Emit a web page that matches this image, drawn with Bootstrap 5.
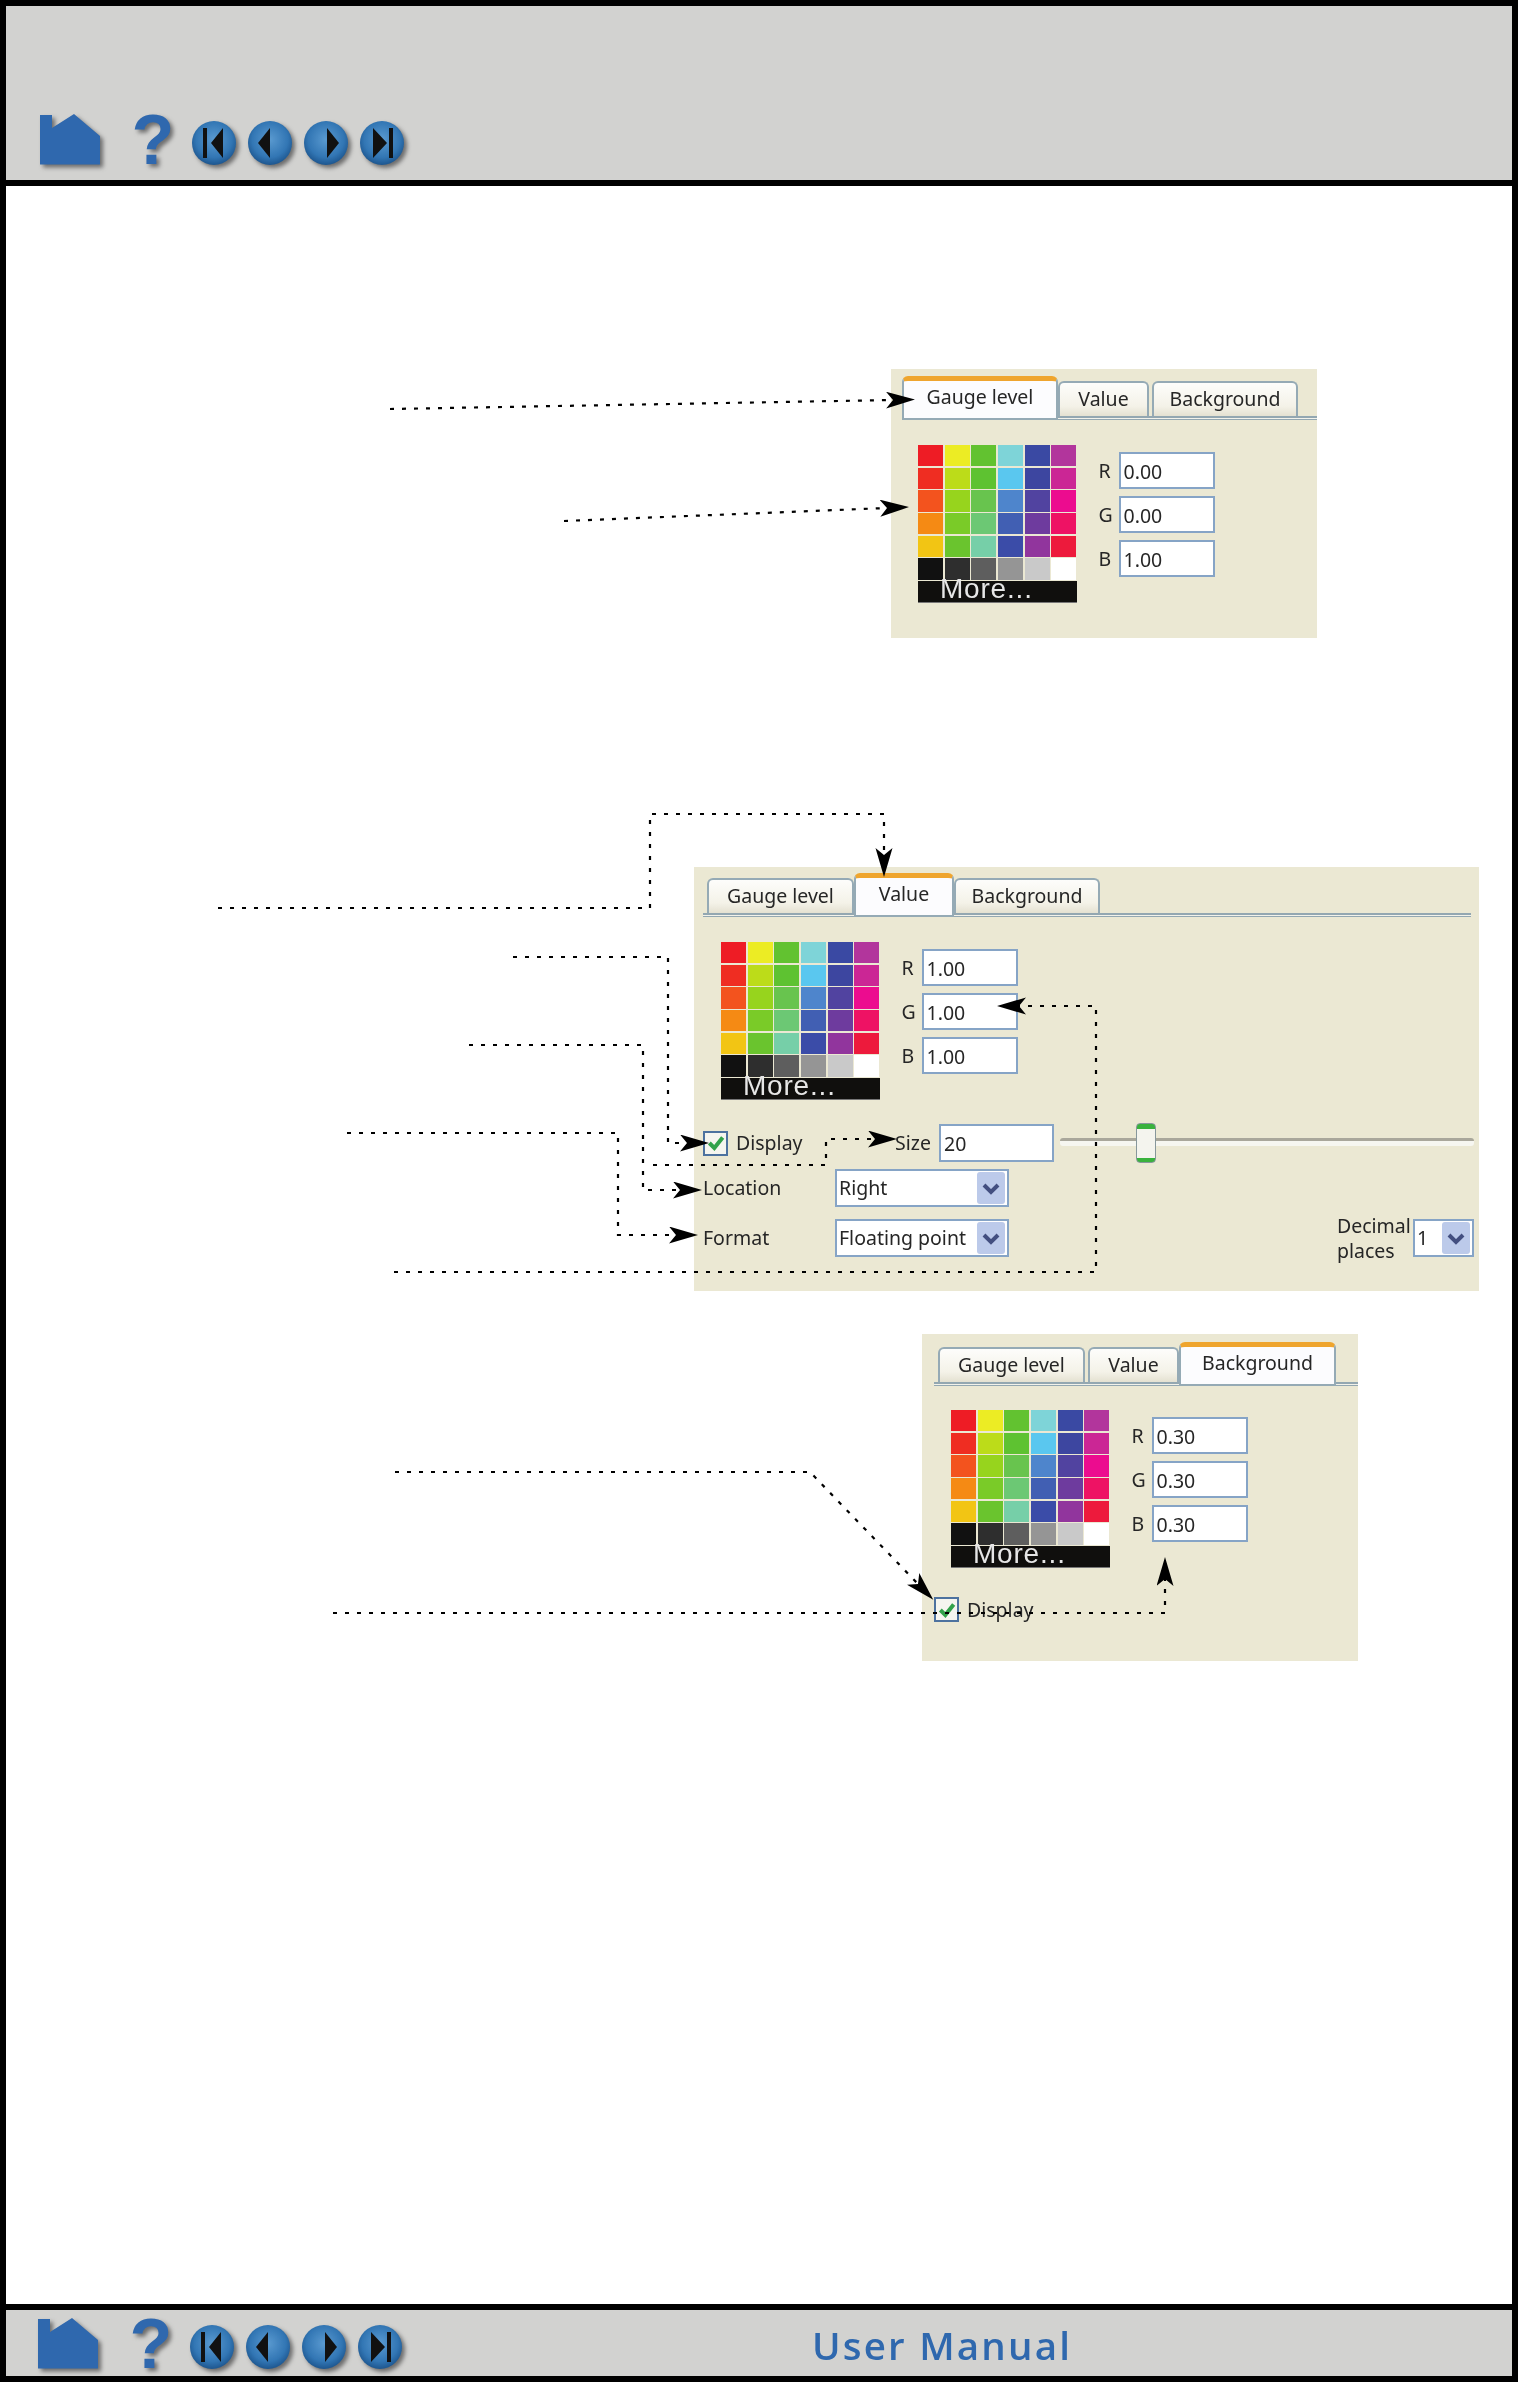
<!DOCTYPE html>
<html lang="en">
<head>
    <meta charset="UTF-8">
    <title>User Manual</title>
    <link href="https://cdn.jsdelivr.net/npm/bootstrap@5.3.0/dist/css/bootstrap.min.css" rel="stylesheet">
    <script src="https://cdn.jsdelivr.net/npm/bootstrap@5.3.0/dist/js/bootstrap.bundle.min.js"></script>
    <style>
        body { background: #000; font-family: "Noto Sans", "Liberation Sans", sans-serif; color: #262626; }
        .frame { height: 2382px; padding: 6px; gap: 6px; }
        .top-bar { height: 174px; background: #d2d2d0; padding: 0 0 13px 34px; }
        .bottom-bar { height: 66px; background: #d2d2d0; padding: 0 0 5px 32px; position: relative; }
        .nav-icons { filter: drop-shadow(3px 3px 2px #6c6c6c) blur(.4px); }
        .help-mark { font-family: "Liberation Sans", sans-serif; font-weight: 700; font-size: 70px; line-height: 54px; width: 44px; color: #2f68ae; margin: 0 15px 0 29px; }
        .round-btn { width: 48px; height: 48px; margin-right: 8px; }
        .home-btn { width: 62px; height: 54px; }
        .manual-title { position: absolute; left: 806px; top: 15px; font-family: "Open Sans", sans-serif; font-weight: 600; font-size: 38.500px; line-height: 40px; letter-spacing: 2.200px; color: #2f68ae; filter: blur(.5px); }
        .canvas-area { position: relative; background: #fff; }
        .notes { position: absolute; left: 0; top: 0; z-index: 3; }
        .notes .dots { fill: none; stroke: #000; stroke-width: 2.2; stroke-dasharray: 4 8; }
        .shot { position: absolute; background: #ebe8d3; filter: blur(.35px); font-size: 19.500px; line-height: 1; }
        .shot-one { left: 885px; top: 183px; width: 426px; height: 269px; padding: 7px 0 0 11px; }
        .shot-two { left: 688px; top: 681px; width: 785px; height: 424px; padding: 6px 5px 0 9px; }
        .shot-three { left: 916px; top: 1148px; width: 436px; height: 327px; padding: 8px 0 0 12px; }
        .tab-strip { align-items: flex-end; border-bottom: 0; padding-left: 4px; height: 44px; background: linear-gradient(#93a7b1 0 1.500px, #f2f2ea 1.500px 3px, #93a7b1 3px) bottom / 100% 4.500px no-repeat; }
        .shot-one .tab-strip { padding-left: 0; }
        .shot-two .tab-strip { margin-right: 3px; }
        .tab-strip .nav-item:not(.is-on) + .nav-item:not(.is-on) { margin-left: 3px; }
        .tab-strip .nav-link { padding: 0; margin: 0 0 4px; text-align: center; height: 35px; line-height: 32px; color: #262626; border: 2px solid #95aab5; border-bottom: 0; border-radius: 6px 6px 0 0; background: linear-gradient(#fdfdfb, #f4f2e8 70%, #e4e1d1); }
        .tab-strip .nav-link.active { margin: 0; height: 44px; line-height: 32px; color: #262626; background: #fcfcfe; border: 2px solid #95aab5; border-top: 5px solid #efa52e; border-bottom: 2px solid #95aab5; border-radius: 6px 6px 0 0; }
        .t-gauge { width: 147px; }
        .t-value { width: 91px; }
        .t-back { width: 146px; }
        .is-on .t-gauge { width: 156px; }
        .is-on .t-value { width: 100px; }
        .is-on .t-back { width: 157px; }
        .picker { padding-left: 16px; margin-top: 25px; gap: 22px; }
        .shot-two .picker { padding-left: 18px; }
        .shot-three .picker { padding-left: 17px; margin-top: 24px; }
        .swatch-box { width: 158.500px; }
        .swatch-grid { display: grid; grid-template-columns: repeat(6, 1fr); gap: 1.500px; }
        .swatch-cell { height: 21.200px; }
        .more-bar { height: 21px; margin-top: 1.500px; background: #100f0d; color: #e6e6e6; font-family: "Liberation Sans", sans-serif; font-size: 28px; line-height: 15px; padding-left: 22px; letter-spacing: .8px; box-shadow: 0 1px 0 #777; }
        .rgb-list { gap: 7px; padding-top: 7px; }
        .rgb-label { width: 20px; }
        .val-input { width: 96px; height: 37px; padding: 1px 3px 0; border: 2px solid #86a4c6; border-radius: 0; background: #fff; font: inherit; color: #262626; }
        .val-select { height: 38px; padding: 0 0 0 2px; border: 2px solid #86a4c6; border-radius: 0; font: inherit; line-height: 1.3; color: #262626; background-color: #fff; background-position: right 2px center; background-size: 28px 32px;
            background-image: url("data:image/svg+xml,%3csvg xmlns='http://www.w3.org/2000/svg' viewBox='0 0 28 32'%3e%3crect width='28' height='32' rx='3' fill='%23bccaea'/%3e%3cpath d='M7 13l7 7 7-7' fill='none' stroke='%23434f80' stroke-width='4'/%3e%3c/svg%3e"); }
        .tick-box.form-check-input { width: 25px; height: 25px; margin: 0; border: 2px solid #4d729f; border-radius: 0; background-color: #f5f5ef; background-size: 20px;
            background-image: url("data:image/svg+xml,%3csvg xmlns='http://www.w3.org/2000/svg' viewBox='0 0 18 18'%3e%3cpath d='M3 9l4.500 4.500L15 4' fill='none' stroke='%2332a24a' stroke-width='3.600'/%3e%3c/svg%3e"); }
        .size-row { margin-top: 24px; height: 40px; }
        .w-size { width: 115px; height: 38px; }
        .w-pick { width: 174px; }
        .w-dec { width: 61px; }
        .size-range { width: 414px; height: 38px; padding: 0; margin-left: 6px; align-self: flex-start; }
        .size-range::-webkit-slider-runnable-track { height: 8px; background: linear-gradient(#a9a79b 0 3px, #f6f6f0 3px); border-radius: 3px; }
        .size-range::-webkit-slider-thumb { -webkit-appearance: none; width: 20px; height: 40px; margin-top: -15px; border: 1px solid #87979b; border-radius: 4px; background: linear-gradient(#39b23d 0 5px, #f4f4ee 5px 34px, #39b23d 34px); }
        .field-row { height: 38px; }
        .field-loc { margin-top: 6px; }
        .field-fmt { margin-top: 12px; }
        .field-name { width: 132px; }
        .dec-label { width: 76px; line-height: 25px; }
        .display-row { margin-top: 30px; }
    </style>
</head>
<body>
<svg width="0" height="0" class="position-absolute">
    <defs>
        <radialGradient id="ballFill" cx="50%" cy="42%" r="58%">
            <stop offset="0" stop-color="#5a9ad0"/>
            <stop offset=".7" stop-color="#3276b4"/>
            <stop offset="1" stop-color="#1d568f"/>
        </radialGradient>
        <symbol id="btnFirst" viewBox="0 0 48 48"><circle cx="24" cy="24" r="22" fill="url(#ballFill)"/><path d="M13 9h4v30h-4zM21 24L33 9v30z" fill="#111"/></symbol>
        <symbol id="btnPrev" viewBox="0 0 48 48"><circle cx="24" cy="24" r="22" fill="url(#ballFill)"/><path d="M12 24L24 9v30z" fill="#111"/></symbol>
        <symbol id="btnNext" viewBox="0 0 48 48"><circle cx="24" cy="24" r="22" fill="url(#ballFill)"/><path d="M37 24L25 9v30z" fill="#111"/></symbol>
        <symbol id="btnLast" viewBox="0 0 48 48"><circle cx="24" cy="24" r="22" fill="url(#ballFill)"/><path d="M35 9h-4v30h4zM29 24L15 9v30z" fill="#111"/></symbol>
        <symbol id="btnHome" viewBox="0 0 62 54"><path d="M0 2h12v13L34 1l26 22v28.500H0z" fill="#2f68ae"/></symbol>
    </defs>
</svg>

<div class="frame d-flex flex-column">
    <header class="top-bar d-flex align-items-end flex-shrink-0">
        <div class="nav-icons d-flex align-items-end">
            <svg class="home-btn"><use href="#btnHome"/></svg>
            <span class="help-mark text-center">?</span>
            <svg class="round-btn"><use href="#btnFirst"/></svg>
            <svg class="round-btn"><use href="#btnPrev"/></svg>
            <svg class="round-btn"><use href="#btnNext"/></svg>
            <svg class="round-btn"><use href="#btnLast"/></svg>
        </div>
    </header>

    <main class="canvas-area flex-grow-1">
        <section class="shot shot-one">
            <ul class="nav nav-tabs tab-strip">
                <li class="nav-item is-on"><a class="nav-link active t-gauge" href="#">Gauge level</a></li>
                <li class="nav-item"><a class="nav-link t-value" href="#">Value</a></li>
                <li class="nav-item"><a class="nav-link t-back" href="#">Background</a></li>
            </ul>
            <div class="picker d-flex">
                <div class="swatch-box"><div class="swatch-grid"></div><div class="more-bar">More...</div></div>
                <div class="rgb-list d-flex flex-column">
                    <div class="d-flex align-items-center"><span class="rgb-label">R</span><input class="val-input" value="0.00"></div>
                    <div class="d-flex align-items-center"><span class="rgb-label">G</span><input class="val-input" value="0.00"></div>
                    <div class="d-flex align-items-center"><span class="rgb-label">B</span><input class="val-input" value="1.00"></div>
                </div>
            </div>
        </section>

        <section class="shot shot-two">
            <ul class="nav nav-tabs tab-strip">
                <li class="nav-item"><a class="nav-link t-gauge" href="#">Gauge level</a></li>
                <li class="nav-item is-on"><a class="nav-link active t-value" href="#">Value</a></li>
                <li class="nav-item"><a class="nav-link t-back" href="#">Background</a></li>
            </ul>
            <div class="picker d-flex">
                <div class="swatch-box"><div class="swatch-grid"></div><div class="more-bar">More...</div></div>
                <div class="rgb-list d-flex flex-column">
                    <div class="d-flex align-items-center"><span class="rgb-label">R</span><input class="val-input" value="1.00"></div>
                    <div class="d-flex align-items-center"><span class="rgb-label">G</span><input class="val-input" value="1.00"></div>
                    <div class="d-flex align-items-center"><span class="rgb-label">B</span><input class="val-input" value="1.00"></div>
                </div>
            </div>
            <div class="size-row d-flex align-items-center">
                <input class="form-check-input tick-box" type="checkbox" checked>
                <span class="ms-2">Display</span>
                <span class="ms-auto me-2">Size</span>
                <input class="val-input w-size" value="20">
                <input class="form-range size-range" type="range" min="1" max="100" value="20">
            </div>
            <div class="field-row field-loc d-flex align-items-center">
                <span class="field-name">Location</span>
                <select class="form-select val-select w-pick"><option>Right</option></select>
            </div>
            <div class="field-row field-fmt d-flex align-items-center">
                <span class="field-name">Format</span>
                <select class="form-select val-select w-pick"><option>Floating point</option></select>
                <span class="dec-label ms-auto">Decimal places</span>
                <select class="form-select val-select w-dec"><option>1</option></select>
            </div>
        </section>

        <section class="shot shot-three">
            <ul class="nav nav-tabs tab-strip">
                <li class="nav-item"><a class="nav-link t-gauge" href="#">Gauge level</a></li>
                <li class="nav-item"><a class="nav-link t-value" href="#">Value</a></li>
                <li class="nav-item is-on"><a class="nav-link active t-back" href="#">Background</a></li>
            </ul>
            <div class="picker d-flex">
                <div class="swatch-box"><div class="swatch-grid"></div><div class="more-bar">More...</div></div>
                <div class="rgb-list d-flex flex-column">
                    <div class="d-flex align-items-center"><span class="rgb-label">R</span><input class="val-input" value="0.30"></div>
                    <div class="d-flex align-items-center"><span class="rgb-label">G</span><input class="val-input" value="0.30"></div>
                    <div class="d-flex align-items-center"><span class="rgb-label">B</span><input class="val-input" value="0.30"></div>
                </div>
            </div>
            <div class="d-flex align-items-center display-row">
                <input class="form-check-input tick-box" type="checkbox" checked>
                <span class="ms-2">Display</span>
            </div>
        </section>

        <!-- callout lines, drawn in page coordinates -->
        <svg class="notes" width="1506" height="2118" viewBox="6 186 1506 2118">
            <defs>
                <marker id="barb" markerUnits="userSpaceOnUse" markerWidth="30" markerHeight="18" refX="7" refY="8.500" orient="auto">
                    <path d="M0 0L29 8.500L0 17L7 8.500z" fill="#000"/>
                </marker>
            </defs>
            <path class="dots" marker-end="url(#barb)" d="M390 409L893 400"/>
            <path class="dots" marker-end="url(#barb)" d="M564 521L887 508"/>
            <path class="dots" marker-end="url(#barb)" d="M218 908H650V814H884V855"/>
            <path class="dots" marker-end="url(#barb)" d="M513 957H668V1143H687"/>
            <path class="dots" marker-end="url(#barb)" d="M469 1045H643V1190H680"/>
            <path class="dots" marker-end="url(#barb)" d="M347 1133H618V1235H676"/>
            <path class="dots" marker-end="url(#barb)" d="M653 1165H826V1139H875"/>
            <path class="dots" marker-end="url(#barb)" d="M394 1272H1096V1006H1019"/>
            <path class="dots" marker-end="url(#barb)" d="M395 1472H810L918 1584"/>
            <path class="dots" marker-end="url(#barb)" d="M333 1613H1165V1579"/>
        </svg>
    </main>

    <footer class="bottom-bar d-flex align-items-end flex-shrink-0">
        <div class="nav-icons d-flex align-items-end">
            <svg class="home-btn"><use href="#btnHome"/></svg>
            <span class="help-mark text-center">?</span>
            <svg class="round-btn"><use href="#btnFirst"/></svg>
            <svg class="round-btn"><use href="#btnPrev"/></svg>
            <svg class="round-btn"><use href="#btnNext"/></svg>
            <svg class="round-btn"><use href="#btnLast"/></svg>
        </div>
        <span class="manual-title">User Manual</span>
    </footer>
</div>

<script>
    // same colour chart in all three panels
    const chart = [
        "#ee1c25", "#ecec24", "#62c230", "#7ed4d8", "#3a49a3", "#b2359c",
        "#ef2d22", "#bcdc19", "#5ec231", "#5ac7ef", "#3d46a0", "#cb2695",
        "#f3531e", "#97d41d", "#68c44e", "#4e85cc", "#5143a0", "#ec0c8f",
        "#f58a14", "#7acb28", "#6cc874", "#415fb3", "#6e3b9e", "#ee1264",
        "#f2c514", "#6ac42e", "#76cfa8", "#3b4ca8", "#91359d", "#ed1a3c",
        "#111111", "#2e2e2e", "#5e5e5e", "#959595", "#c9c9c9", "#ffffff"
    ];
    document.querySelectorAll(".swatch-grid").forEach(grid => {
        grid.innerHTML = chart.map(c => `<div class="swatch-cell" style="background:${c}"></div>`).join("");
    });
</script>
</body>
</html>
